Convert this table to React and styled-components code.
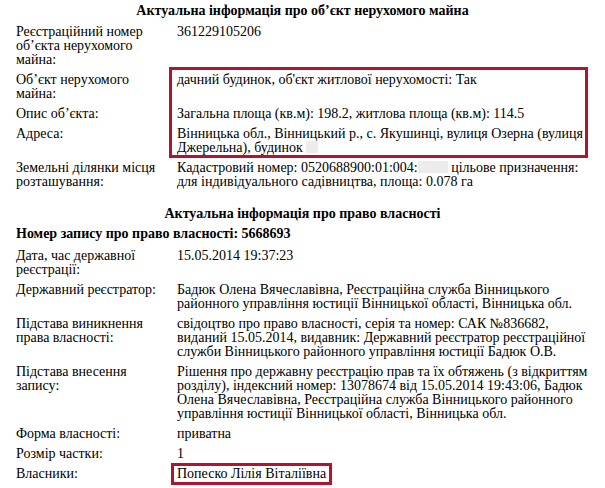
import React from "react";
import styled, { createGlobalStyle } from "styled-components";

const Global = createGlobalStyle`
  html, body { margin: 0; padding: 0; background: #fff; }
  body { font-family: "Liberation Serif", "Times New Roman", serif; color: #000; }
`;

const Page = styled.div`
  width: 605px;
  height: 488px;
  overflow: hidden;
  padding-top: 4px;
  box-sizing: border-box;
  font-family: "Liberation Serif", "Times New Roman", serif;
  font-size: 14px;
  line-height: 14px;
`;

const SectionTitle = styled.div`
  text-align: center;
  font-weight: bold;
  margin: ${(p) => p.$m || "0"};
`;

const RecordTitle = styled.div`
  font-weight: bold;
  margin: 6px 0 8px 16px;
`;

const Grid = styled.div`
  display: grid;
  grid-template-columns: 161px 420px;
  row-gap: 6px;
  margin: ${(p) => p.$m || "0"} 0 0 16px;
`;

const Label = styled.div`
  grid-column: 1;
  grid-row: ${(p) => p.$row};
  padding-right: 12px;
`;

const Value = styled.div`
  grid-column: 2;
  grid-row: ${(p) => p.$row};
`;

const Highlight = styled.div`
  grid-column: 2;
  grid-row: ${(p) => p.$rows};
  margin: -6px 9px -3px -8px;
  border: 3px solid #b3132d;
  pointer-events: none;
`;

const Owner = styled.span`
  display: inline-block;
  margin: -4px 0 0 -6px;
  padding: 1px 3px 1px 3px;
  line-height: 14px;
  border: 3px solid #b3132d;
`;

const Blur = styled.span`
  display: inline-block;
  width: ${(p) => p.$w}px;
  height: 12px;
  vertical-align: -1px;
  background: #ececec;
`;

export default function App() {
  return (
    <>
      <Global />
      <Page>
        <SectionTitle>Актуальна інформація про об’єкт нерухомого майна</SectionTitle>
        <Grid $m="7px">
          <Label $row={1}>Реєстраційний номер об’єкта нерухомого майна:</Label>
          <Value $row={1}>361229105206</Value>
          <Label $row={2}>Об’єкт нерухомого майна:</Label>
          <Value $row={2}>дачний будинок, об'єкт житлової нерухомості: Так</Value>
          <Label $row={3}>Опис об’єкта:</Label>
          <Value $row={3}>Загальна площа (кв.м): 198.2, житлова площа (кв.м): 114.5</Value>
          <Label $row={4}>Адреса:</Label>
          <Value $row={4}>
            Вінницька обл., Вінницький р., с. Якушинці, вулиця Озерна (вулиця<br />
            Джерельна), будинок <Blur $w={12} />
          </Value>
          <Highlight $rows="2 / 5" />
          <Label $row={5}>Земельні ділянки місця розташування:</Label>
          <Value $row={5}>
            Кадастровий номер: 0520688900:01:004:<Blur $w={30} /> цільове призначення:<br />
            для індивідуального садівництва, площа: 0.078 га
          </Value>
        </Grid>
        <SectionTitle $m="18px 0 0">Актуальна інформація про право власності</SectionTitle>
        <RecordTitle>Номер запису про право власності: 5668693</RecordTitle>
        <Grid>
          <Label $row={1}>Дата, час державної реєстрації:</Label>
          <Value $row={1}>15.05.2014 19:37:23</Value>
          <Label $row={2}>Державний реєстратор:</Label>
          <Value $row={2}>
            Бадюк Олена Вячеславівна, Реєстраційна служба Вінницького<br />
            районного управління юстиції Вінницької області, Вінницька обл.
          </Value>
          <Label $row={3}>Підстава виникнення права власності:</Label>
          <Value $row={3}>
            свідоцтво про право власності, серія та номер: САК №836682,<br />
            виданий 15.05.2014, видавник: Державний реєстратор реєстраційної<br />
            служби Вінницького районного управління юстиції Бадюк О.В.
          </Value>
          <Label $row={4}>Підстава внесення запису:</Label>
          <Value $row={4}>
            Рішення про державну реєстрацію прав та їх обтяжень (з відкриттям<br />
            розділу), індексний номер: 13078674 від 15.05.2014 19:43:06, Бадюк<br />
            Олена Вячеславівна, Реєстраційна служба Вінницького районного<br />
            управління юстиції Вінницької області, Вінницька обл.
          </Value>
          <Label $row={5}>Форма власності:</Label>
          <Value $row={5}>приватна</Value>
          <Label $row={6}>Розмір частки:</Label>
          <Value $row={6}>1</Value>
          <Label $row={7}>Власники:</Label>
          <Value $row={7}><Owner>Попеско Лілія Віталіївна</Owner></Value>
        </Grid>
      </Page>
    </>
  );
}
